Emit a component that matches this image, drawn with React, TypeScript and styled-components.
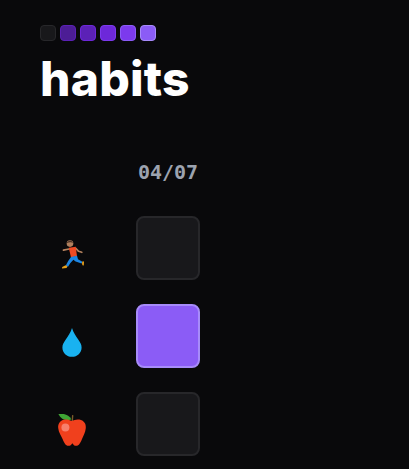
import React from 'react';
import styled, { createGlobalStyle } from 'styled-components';

const GlobalStyle = createGlobalStyle`
  html, body {
    margin: 0;
    padding: 0;
    background: #09090b;
  }
`;

const Page = styled.div`
  width: 409px;
  height: 469px;
  overflow: hidden;
  box-sizing: border-box;
  padding: 25px 40px 0;
  background: #09090b;
`;

const Swatches = styled.div`
  display: flex;
  gap: 4px;
`;

const Swatch = styled.div<{ $bg: string; $border: string }>`
  width: 16px;
  height: 16px;
  box-sizing: border-box;
  border-radius: 4px;
  background: ${(p) => p.$bg};
  border: 1px solid ${(p) => p.$border};
`;

const Title = styled.h1`
  margin: 8px 0 0;
  font-family: Inter, 'Liberation Sans', sans-serif;
  font-size: 48px;
  line-height: 60px;
  font-weight: 800;
  letter-spacing: 0.2px;
  color: #ffffff;
`;

const Grid = styled.div`
  display: grid;
  grid-template-columns: 64px 64px;
  column-gap: 32px;
  row-gap: 24px;
  margin-top: 49px;
  justify-items: center;
  align-items: center;
`;

const Counter = styled.div`
  grid-column: 2;
  font-family: 'DejaVu Sans Mono', 'Liberation Mono', monospace;
  font-size: 20px;
  line-height: 28px;
  font-weight: 700;
  white-space: nowrap;
  color: #9ca3af;
  margin-bottom: 6px;
`;

const Glyph = styled.div`
  display: flex;
  align-items: center;
  justify-content: center;
  width: 40px;
  height: 40px;
  margin-top: 12px;
`;

const Cell = styled.div<{ $on?: boolean }>`
  width: 64px;
  height: 64px;
  box-sizing: border-box;
  border-radius: 8px;
  background: ${(p) => (p.$on ? '#8b5cf6' : '#18181b')};
  border: 2px solid ${(p) => (p.$on ? '#a78bfa' : '#27272a')};
`;

const swatches = [
  { bg: '#18181b', border: '#27272a' },
  { bg: '#4c1d95', border: '#5b21b6' },
  { bg: '#5b21b6', border: '#6d28d9' },
  { bg: '#6d28d9', border: '#7c3aed' },
  { bg: '#7c3aed', border: '#8b5cf6' },
  { bg: '#8b5cf6', border: '#a78bfa' },
];

const Runner = () => (
  <svg width="32" height="32" viewBox="0 0 32 32" fill="none">
    <path d="M13 11L7.5 12.2M20 10.5l2.6 2.8 3.2 1" stroke="#b5835f" strokeWidth="1.7" strokeLinecap="round" strokeLinejoin="round" />
    <circle cx="14" cy="5.6" r="3.3" fill="#b0805e" />
    <path d="M10.7 5.2c.2-3 5.8-3.4 6.6-.4-2-.8-4.4-.8-6.6.4z" fill="#4a3226" />
    <path d="M12.8 9.8l7-1 1.2 9.4-6 1.2z" fill="#ef4b23" />
    <path d="M15 19l6-1.2 1 3.4 4.4 2.6-.8 1.8-6-2.2-2.2-1.6-3.2 3.4-2.2 3.6-2.2-1.2 2.4-4.6z" fill="#1d86e3" />
    <path d="M9.6 27.2l1.8 1-.8 1.8-4.6.4.2-1.4zM26.6 23.2l1.4.4-.2 3.8-1.4-.2-.4-2.2z" fill="#e8a11c" />
  </svg>
);

const Drop = () => (
  <svg width="32" height="32" viewBox="0 0 32 32">
    <path d="M16 2c1.6 5 3.8 8 6.4 11.8 1.8 2.6 3.2 4.8 3.2 7.6 0 5.2-4.2 9.4-9.6 9.4s-9.6-4.2-9.6-9.4c0-2.8 1.4-5 3.2-7.6C12.2 10 14.4 7 16 2z" fill="#19b2f0" />
  </svg>
);

const Apple = () => (
  <svg width="32" height="32" viewBox="0 0 32 32">
    <path d="M15.6 7l.4-6 1.4.2-.4 6z" fill="#7a5a2a" />
    <path d="M2.4 0c5-.8 10.4.4 13 5.4C10.4 7.4 5 5.6 2.4 0z" fill="#3fa535" />
    <path d="M8.6 5.6c2.8-.4 5 .4 7.2 1.4 2.2-1 5-2 7.6-1.4 4.4 1 6.8 4 6.4 8.4-.4 4.4-2.4 7.8-4 11.4-1.2 3-2.8 6.4-5.6 6.4-1.8 0-2.8-1-3.8-2.6-1 1.6-2.2 2.6-4 2.6-2.8 0-4.4-3.4-5.6-6.4-1.6-3.6-4.2-7-4.6-11.4-.4-4.6 2.4-7.8 6.4-8.4z" fill="#f0401d" />
    <circle cx="9.4" cy="13.6" r="4" fill="#f77f6c" />
  </svg>
);

const rows = [
  { id: 'run', icon: <Runner />, on: false },
  { id: 'water', icon: <Drop />, on: true },
  { id: 'food', icon: <Apple />, on: false },
];

const App: React.FC = () => (
  <Page>
    <GlobalStyle />
    <Swatches>
      {swatches.map((s) => (
        <Swatch key={s.bg} $bg={s.bg} $border={s.border} />
      ))}
    </Swatches>
    <Title>habits</Title>
    <Grid>
      <Counter>04/07</Counter>
      {rows.map((r) => (
        <React.Fragment key={r.id}>
          <Glyph>{r.icon}</Glyph>
          <Cell $on={r.on} />
        </React.Fragment>
      ))}
    </Grid>
  </Page>
);

export default App;
